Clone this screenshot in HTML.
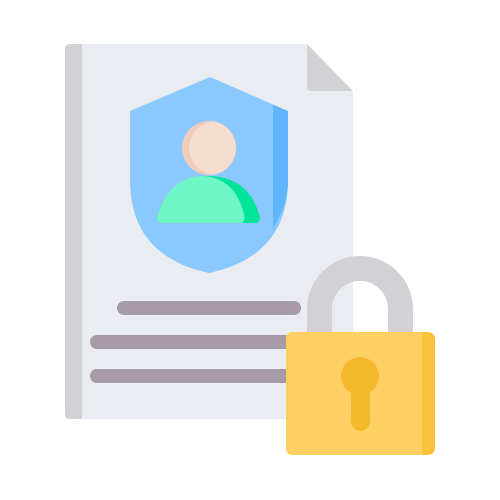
<!DOCTYPE html>
<html><head><meta charset="utf-8"><style>html,body{margin:0;padding:0;background:#fff;}svg{display:block}</style></head>
<body>
<svg width="500" height="500" viewBox="0 0 500 500" xmlns="http://www.w3.org/2000/svg">
<defs><clipPath id="hc"><circle cx="209" cy="148" r="27"/></clipPath></defs>
<path d="M70,44 H307 L353,91 V419 H70 Q65,419 65,414 V49 Q65,44 70,44 Z" fill="#e9edf1"/>
<path d="M70,44 H82 V419 H70 Q65,419 65,414 V49 Q65,44 70,44 Z" fill="#d1d1d6"/>
<path d="M307,44 L353,91 H311 Q307,91 307,87 Z" fill="#d1d1d6"/>
<path d="M210,77 L288,111 V180 Q288,256 209,273 Q130,256 130,180 V111 Z" fill="#8ac8fe"/>
<path d="M273,105 L288,111 V180 Q288,205 273,228 Z" fill="#61b5fe"/>
<circle cx="209" cy="148" r="27" fill="#efcbba"/>
<circle cx="216" cy="148" r="27" fill="#f4dccf" clip-path="url(#hc)"/>
<path d="M163,223 Q155,223 158,214 Q170,177 209,176 Q248,177 259,214 Q262,223 254,223 Z" fill="#00e499"/>
<path d="M163,223 Q155,223 158,214 Q170,177 203,176 Q235,178 244,214 Q246,223 240,223 Z" fill="#6ff6c6"/>
<g stroke="#a69ba6" stroke-width="14" stroke-linecap="round">
<line x1="124" y1="308" x2="294" y2="308"/>
<line x1="97" y1="342" x2="300" y2="342"/>
<line x1="97" y1="376" x2="300" y2="376"/>
</g>
<path d="M319.5,334 V309 A40.5,40.5 0 0 1 400.5,309 V334" fill="none" stroke="#d1d1d6" stroke-width="25"/>
<rect x="286" y="332" width="149" height="123" rx="7" fill="#fcc13a"/>
<path d="M293,332 H422 V455 H293 Q286,455 286,448 V339 Q286,332 293,332 Z" fill="#fed064"/>
<circle cx="360" cy="376" r="19" fill="#f4b82b"/>
<rect x="351" y="376" width="19" height="55" rx="9.5" fill="#f4b82b"/>
</svg>
</body></html>
